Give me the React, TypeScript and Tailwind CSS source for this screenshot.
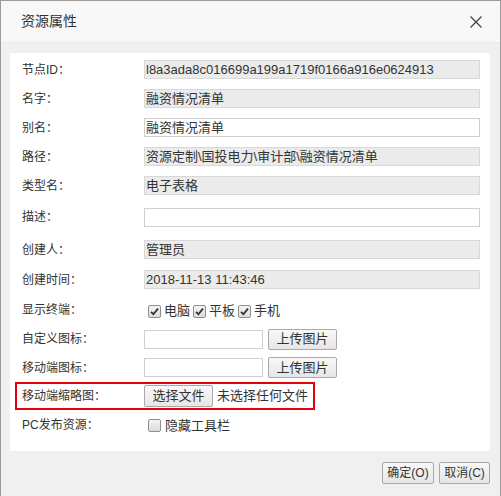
import React from 'react';

const FONT = "font-['Liberation_Sans','Noto_Sans_CJK_SC',sans-serif]";

const Check = ({ checked }: { checked: boolean }) => (
	<span className="inline-flex h-[13px] w-[13px] items-center justify-center rounded-[2px] border border-[#8f8f8f] bg-gradient-to-b from-[#f4f4f4] to-[#dcdcdc]">
		{checked && (
			<svg width="9" height="9" viewBox="0 0 9 9">
				<path d="M1 4.8 L3.4 7.2 L8 1.6" fill="none" stroke="#333" strokeWidth="1.8" />
			</svg>
		)}
	</span>
);

const Row = ({ label, h, children }: { label: string; h: string; children?: React.ReactNode }) => (
	<div className={`flex items-center pl-[12px] ${h}`}>
		<div className="w-[122px] text-[12px] text-[#333]">{label}</div>
		{children}
	</div>
);

const Field = ({ value, gray, w = 'w-[336px]' }: { value?: string; gray?: boolean; w?: string }) => (
	<div className={`flex h-[19px] items-center border px-[1px] text-[13px] leading-none text-[#333] ${w} ${gray ? 'border-[#d8d8d8] bg-[#ebebeb]' : 'border-[#cfcfcf] bg-white'}`}>
		{value}
	</div>
);

const Btn = ({ children, cls }: { children: React.ReactNode; cls: string }) => (
	<div className={`flex items-center justify-center rounded-[2px] border border-[#a9a9a9] bg-gradient-to-b from-[#f8f8f8] to-[#e6e6e6] text-[#333] ${cls}`}>
		{children}
	</div>
);

export default function App() {
	return (
		<div className={`h-[496px] w-[501px] overflow-hidden border-x border-t border-[#9c9c9c] bg-[#f0f0f0] ${FONT}`}>
			<div className="flex h-[42px] items-center justify-between border-b border-[#e8e8e8] bg-[#f8f8f8] pl-[20px] pr-[18px]">
				<span className="text-[14px] text-[#333]">资源属性</span>
				<svg width="12" height="12" viewBox="0 0 12 12">
					<path d="M0.5 0.5 L11.5 11.5 M11.5 0.5 L0.5 11.5" stroke="#444" strokeWidth="1.3" />
				</svg>
			</div>
			<div className="px-[9px] pt-[10px]">
				<div className="h-[398px] w-[480px] bg-white pt-[2px]">
					<Row label="节点ID：" h="h-[29px]"><Field gray value="l8a3ada8c016699a199a1719f0166a916e0624913" /></Row>
					<Row label="名字：" h="h-[29px]"><Field gray value="融资情况清单" /></Row>
					<Row label="别名：" h="h-[29px]"><Field value="融资情况清单" /></Row>
					<Row label="路径：" h="h-[29px]"><Field gray value="资源定制\国投电力\审计部\融资情况清单" /></Row>
					<Row label="类型名：" h="h-[29px]"><Field gray value="电子表格" /></Row>
					<Row label="描述：" h="h-[34px]"><Field /></Row>
					<Row label="创建人：" h="h-[31px]"><Field gray value="管理员" /></Row>
					<Row label="创建时间：" h="h-[29px]"><Field gray value="2018-11-13 11:43:46" /></Row>
					<Row label="显示终端：" h="h-[31px]">
						<div className="flex items-center pl-[4px] pt-[3px] text-[13px] text-[#333]">
							<Check checked /><span className="ml-[3px] mr-[3px]">电脑</span>
							<Check checked /><span className="ml-[3px] mr-[3px]">平板</span>
							<Check checked /><span className="ml-[3px]">手机</span>
						</div>
					</Row>
					<Row label="自定义图标：" h="h-[28px]">
						<Field w="w-[119px]" />
						<Btn cls="ml-[5px] h-[21px] w-[69px] text-[13px]">上传图片</Btn>
					</Row>
					<Row label="移动端图标：" h="h-[29px]">
						<Field w="w-[119px]" />
						<Btn cls="ml-[5px] h-[21px] w-[69px] text-[13px]">上传图片</Btn>
					</Row>
					<div className="ml-[5px] flex h-[28px] w-[300px] items-center border-2 border-[#e3000b] pl-[5px]">
						<div className="w-[122px] text-[12px] text-[#333]">移动端缩略图：</div>
						<Btn cls="h-[22px] w-[69px] text-[13px]">选择文件</Btn>
						<span className="ml-[4px] text-[13px] text-[#333]">未选择任何文件</span>
					</div>
					<Row label="PC发布资源：" h="h-[30px]">
						<div className="flex items-center pl-[4px] text-[13px] text-[#333]">
							<Check checked={false} /><span className="ml-[4px] mt-[2px]">隐藏工具栏</span>
						</div>
					</Row>
				</div>
				<div className="flex justify-end gap-[5px] pr-[1px] pt-[11px]">
					<Btn cls="h-[22px] w-[52px] text-[12px]">确定(O)</Btn>
					<Btn cls="h-[22px] w-[51px] text-[12px]">取消(C)</Btn>
				</div>
			</div>
		</div>
	);
}
